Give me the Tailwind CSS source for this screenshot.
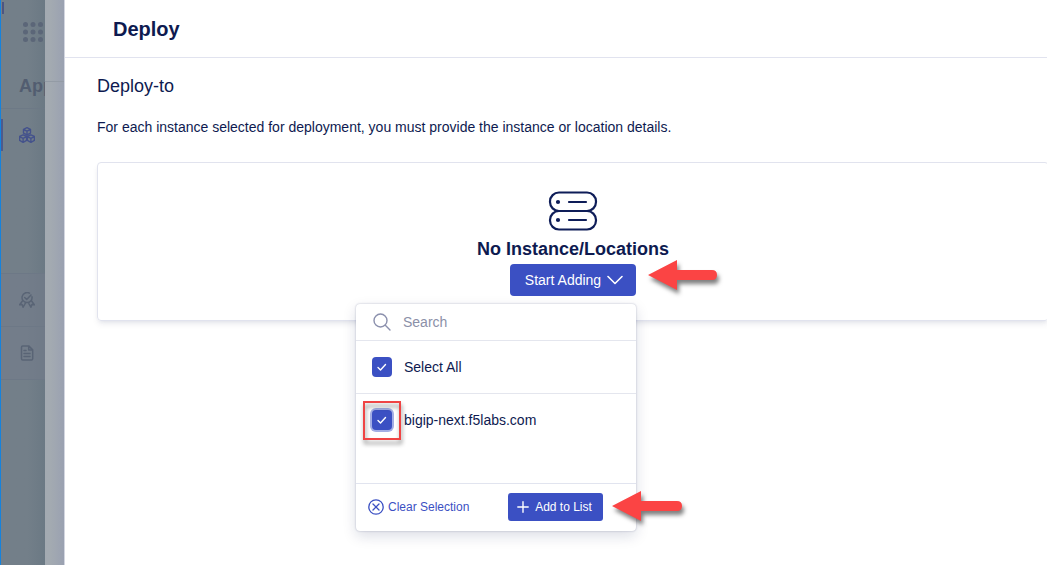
<!DOCTYPE html>
<html lang="en">
<head>
<meta charset="utf-8">
<meta name="viewport" content="width=device-width, initial-scale=1">
<title>Deploy</title>
<script src="https://cdn.jsdelivr.net/npm/@tailwindcss/browser@4"></script>
</head>
<body class="flex h-screen overflow-hidden bg-white font-['Liberation_Sans',Arial,sans-serif] text-sm text-[#0e1a50]">

<!-- Dimmed application navigation -->
<nav aria-label="Application" class="relative flex w-[45px] shrink-0 flex-col overflow-hidden border-l border-[#1582dc] bg-linear-to-r from-[#737f89] from-60% to-[#6b7984]">
  <span class="absolute top-0.5 left-px h-3 w-0.5 bg-[#4d5582]"></span>
  <button type="button" aria-label="Apps menu" class="mt-[21px] ml-[21px] w-6">
    <svg viewBox="0 0 24 22" class="h-[22px] w-6" fill="#5b6678"><circle cx="3.500" cy="3.500" r="2.500"/><circle cx="11" cy="3.500" r="2.500"/><circle cx="18.500" cy="3.500" r="2.500"/><circle cx="3.500" cy="11" r="2.500"/><circle cx="11" cy="11" r="2.500"/><circle cx="18.500" cy="11" r="2.500"/><circle cx="3.500" cy="18.500" r="2.500"/><circle cx="11" cy="18.500" r="2.500"/><circle cx="18.500" cy="18.500" r="2.500"/></svg>
  </button>
  <h2 class="mt-[31px] ml-[18px] text-lg leading-6 font-bold whitespace-nowrap text-[#525d70]">App</h2>
  <a href="#apps" aria-label="Applications" class="relative mt-2.5 flex h-[53px] items-center border-t border-[#6d7986] pl-[18px] text-[#44528c]">
    <span class="absolute top-2.5 left-0 h-8 w-0.5 bg-[#4d5a8d]"></span>
    <svg viewBox="0 0 16 16" class="size-4" fill="none" stroke="currentColor" stroke-width="1.400" stroke-linejoin="round"><path d="M8 .7 11.500 2.300v3.800L8 7.900 4.500 6.100V2.300zM4.500 2.500 8 4.200l3.500-1.700M8 4.200v3.600M4.100 7.800l3.500 1.600v4L4.100 15.300.6 13.400v-4zM.7 9.600l3.400 1.700 3.400-1.700M4.100 11.300v3.800M11.900 7.800l3.500 1.600v4l-3.500 1.900-3.500-1.900v-4zM8.500 9.600l3.400 1.700 3.400-1.700M11.900 11.300v3.800"/></svg>
  </a>
  <a href="#security" aria-label="Security" class="mt-28 flex h-[53px] items-center border-t border-[#6d7886] bg-[#737b8b]/60 pl-[18px] text-[#596475]">
    <svg viewBox="0 0 16 16" class="size-4" fill="none" stroke="currentColor" stroke-width="1.500" stroke-linejoin="round" stroke-linecap="round"><path d="M10.500 1.200A5 5 0 1 0 13 4.800M5.700 5.500 7.700 7.500 12 3M3.600 8.700.7 12.800l2.400-.2 1 2.600 2.600-4.500M12.400 8.700l2.900 4.100-2.400-.2-1 2.600-2.600-4.500"/></svg>
  </a>
  <a href="#reports" aria-label="Reports" class="flex h-[54px] items-center border-y border-[#6d7886] bg-[#737b8b]/60 pl-[18px] text-[#596475]">
    <svg viewBox="0 0 16 16" class="size-4" fill="none" stroke="currentColor" stroke-width="1.500" stroke-linejoin="round" stroke-linecap="round"><path d="M3.700.9h6l4 4v8.900q0 1.300-1.300 1.300H3.800q-1.300 0-1.300-1.300V2.200Q2.500.9 3.700.9zM9.700 1v3.900h3.900M5 5.500h2M5 8.500h6M5 11.500h6"/></svg>
  </a>
</nav>

<div class="w-5 shrink-0 border-r border-[#d3d6e0] bg-linear-to-r from-[#a3aab1] from-30% to-[#9aa1b1]">
  <div class="h-[82px] border-b border-[#939ba5]"></div>
</div>

<!-- Deploy drawer -->
<main class="flex min-w-0 grow flex-col">
  <header class="flex h-[58px] items-center border-b border-[#e1e3ef] pl-12">
    <h1 class="text-xl leading-7 font-bold">Deploy</h1>
  </header>
  <section class="pt-4 pl-8">
    <h2 class="text-lg leading-6">Deploy-to</h2>
    <p class="mt-[19px] leading-5">For each instance selected for deployment, you must provide the instance or location details.</p>

    <div class="-mr-0.5 mt-[25px] flex flex-col items-center rounded border border-[#e1e3ee] pt-7 pb-6 shadow-md shadow-[#0e1a50]/8">
      <svg viewBox="0 0 50 40" class="h-10 w-[50px]" fill="none" stroke="#0e1d58" stroke-width="2.200" stroke-linecap="round"><rect x="2" y="1.500" width="46" height="18.500" rx="9"/><rect x="2" y="20" width="46" height="18.500" rx="9"/><path d="M21 11h17M21 29h17"/><circle cx="10" cy="11" r="1" fill="#0e1d58"/><circle cx="10" cy="29" r="1" fill="#0e1d58"/></svg>
      <h3 class="mt-1.5 text-lg leading-6 font-bold">No Instance/Locations</h3>
      <div class="relative mt-[3px]">
        <button type="button" aria-expanded="true" class="flex h-8 w-[126px] items-center justify-center gap-1.5 rounded bg-[#3b50c3] pl-0.5 whitespace-nowrap text-white">Start Adding
          <svg viewBox="0 0 16 10" class="h-2.5 w-4" fill="none" stroke="currentColor" stroke-width="1.600" stroke-linecap="round" stroke-linejoin="round"><path d="M1 1.500l7 7 7-7"/></svg>
        </button>

        <!-- Callout arrow for Start Adding -->
        <svg viewBox="0 0 72 32" class="absolute -top-1 left-[138px] h-8 w-[72px] overflow-visible drop-shadow-[2px_4px_2px_rgba(0,0,0,0.5)]" fill="#fb4444"><path d="M0 15 29 0v10h35q5 0 5 5t-5 5H29v10z"/></svg>

        <!-- Instance picker -->
        <div class="absolute top-10 right-0 flex w-[280px] flex-col rounded bg-white shadow-[0_0_2px_rgba(14,26,80,0.3),0_5px_14px_rgba(14,26,80,0.15)]">
          <label class="flex h-9 items-center gap-3 pl-[17px]">
            <svg viewBox="0 0 18 18" class="size-[18px] shrink-0" fill="none" stroke="#8b90ad" stroke-width="1.400" stroke-linecap="round"><circle cx="7.500" cy="7.500" r="6.500"/><path d="M12.300 12.300 17 17"/></svg>
            <input type="text" aria-label="Search" placeholder="Search" class="w-full min-w-0 pr-4 outline-none placeholder:text-[#8b90a8]">
          </label>
          <label class="flex h-[53px] items-center gap-3 border-t border-[#e4e6ee] pl-4">
            <span class="relative grid size-5">
              <input type="checkbox" checked class="size-5 appearance-none rounded bg-[#3b50c3]">
              <svg viewBox="0 0 20 20" class="pointer-events-none absolute inset-0" fill="none" stroke="#fff" stroke-width="1.400" stroke-linecap="round" stroke-linejoin="round"><path d="M6 10.500 8.500 13 13.500 7.500"/></svg>
            </span>
            Select All
          </label>
          <div class="h-[90px] border-t border-[#e4e6ee]">
            <label class="flex h-[52px] items-center gap-3 pl-4">
              <span class="relative grid size-5">
                <input type="checkbox" checked class="size-5 appearance-none rounded bg-[#3b50c3] ring-2 ring-[#a3aee5]">
                <svg viewBox="0 0 20 20" class="pointer-events-none absolute inset-0" fill="none" stroke="#fff" stroke-width="1.400" stroke-linecap="round" stroke-linejoin="round"><path d="M6 10.500 8.500 13 13.500 7.500"/></svg>
                <!-- Callout frame -->
                <span class="pointer-events-none absolute -inset-x-[9px] -top-[9px] -bottom-2.5 border-2 border-[#ef4444] drop-shadow-[1px_4px_2px_rgba(0,0,0,0.45)]"></span>
              </span>
              bigip-next.f5labs.com
            </label>
          </div>
          <div class="relative flex h-12 items-center justify-between border-t border-[#e1e4ef] pr-[33px] pb-0.5 pl-3 text-xs">
            <button type="button" class="flex items-center gap-1 text-[#3b50c3]">
              <svg viewBox="0 0 16 16" class="size-4" fill="none" stroke="currentColor" stroke-width="1.300" stroke-linecap="round"><circle cx="8" cy="8" r="7.200"/><path d="M5 5l6 6M11 5l-6 6"/></svg>
              Clear Selection
            </button>
            <button type="button" class="flex h-7 w-[95px] items-center justify-center gap-1.5 rounded-[3px] bg-[#3b50c3] pr-0.5 whitespace-nowrap text-white">
              <svg viewBox="0 0 12 12" class="size-3" fill="none" stroke="currentColor" stroke-width="1.400" stroke-linecap="round"><path d="M6 .8v10.400M.8 6h10.400"/></svg>
              Add to List
            </button>
            <!-- Callout arrow for Add to List -->
            <svg viewBox="0 0 72 32" class="absolute top-[7px] left-64 h-8 w-[72px] overflow-visible drop-shadow-[2px_4px_2px_rgba(0,0,0,0.5)]" fill="#fb4444"><path d="M0 15 29 0v10h36q5 0 5 5t-5 5H29v10z"/></svg>
          </div>
        </div>
      </div>
    </div>
  </section>
</main>
</body>
</html>
